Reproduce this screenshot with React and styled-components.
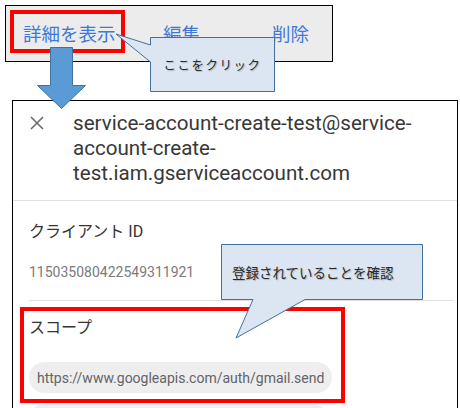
import React from "react";
import styled, { createGlobalStyle } from "styled-components";

const GlobalStyle = createGlobalStyle`
  html, body {
    margin: 0;
    padding: 0;
    background: #fff;
  }
`;

const Canvas = styled.div`
  position: relative;
  width: 460px;
  height: 408px;
  overflow: hidden;
  font-family: Roboto, "Noto Sans CJK JP", sans-serif;
`;

const TopBar = styled.div`
  box-sizing: border-box;
  margin: 5px 0 0 5px;
  width: 328px;
  height: 57px;
  border: 1px solid #000;
  background: #ececec;
  display: grid;
  grid-template-columns: 140px 109px auto;
  align-items: center;
  padding: 0 0 2px 17px;
`;

const Action = styled.span`
  font-family: "Noto Sans CJK JP", sans-serif;
  font-size: 18.5px;
  color: #3f79d6;
  line-height: 24px;
`;

const Panel = styled.div`
  box-sizing: border-box;
  margin: 38px 0 0 12px;
  width: 446px;
  height: 340px;
  border: 1px solid #000;
  border-bottom: none;
  background: #fff;
`;

const Header = styled.div`
  display: flex;
  align-items: flex-start;
  padding: 10px 8px 14px 17px;
  border-bottom: 1px solid #e0e0e0;
`;

const CloseIcon = styled.svg`
  flex: none;
  width: 14px;
  height: 14px;
  margin-top: 5px;
`;

const Title = styled.div`
  margin-left: 29px;
  font-size: 20.6px;
  line-height: 25px;
  color: #383838;
`;

const Section = styled.div`
  padding: ${(p) => p.$top}px 3px 0 16px;
`;

const Label = styled.div`
  font-size: 16px;
  line-height: 24px;
  color: #333;
`;

const Value = styled.div`
  margin-top: 18px;
  font-size: 14px;
  line-height: 20px;
  color: #7a7a7a;
  padding-bottom: 18px;
  border-bottom: 1px solid #e0e0e0;
`;

const Chips = styled.div`
  margin-top: 22px;
  display: flex;
  flex-direction: column;
  align-items: flex-start;
  gap: 11px;
`;

const Chip = styled.span`
  display: inline-flex;
  align-items: center;
  box-sizing: border-box;
  height: 31px;
  width: ${(p) => (p.$w ? `${p.$w}px` : "auto")};
  padding: 0 8px;
  border-radius: 16px;
  background: #eeeeee;
  font-size: 14px;
  color: #636369;
`;

const RedFrame = styled.div`
  position: absolute;
  box-sizing: border-box;
  left: ${(p) => p.$x}px;
  top: ${(p) => p.$y}px;
  width: ${(p) => p.$w}px;
  height: ${(p) => p.$h}px;
  border: 4px solid #ff0000;
`;

const Arrow = styled.svg`
  position: absolute;
  left: 0;
  top: 0;
  width: 120px;
  height: 120px;
`;

const Callout = styled.div`
  position: absolute;
  left: ${(p) => p.$x}px;
  top: ${(p) => p.$y}px;
  width: ${(p) => p.$w}px;
  height: ${(p) => p.$h}px;
  display: flex;
  align-items: center;
  justify-content: ${(p) => (p.$center ? "center" : "flex-start")};
  padding-left: ${(p) => p.$pad || 0}px;
  box-sizing: border-box;
`;

const CalloutShape = styled.svg`
  position: absolute;
  left: 0;
  top: 0;
  overflow: visible;
`;

const CalloutText = styled.span`
  position: relative;
  font-family: "Noto Sans CJK JP", sans-serif;
  font-size: ${(p) => p.$size}px;
  letter-spacing: ${(p) => p.$spacing || 0}px;
  color: #2a2a2a;
  text-shadow: 1px 1px 1px rgba(0, 0, 0, 0.22);
`;

const App = () => {
  return (
    <Canvas>
      <GlobalStyle />
      <TopBar>
        <Action>詳細を表示</Action>
        <Action>編集</Action>
        <Action>削除</Action>
      </TopBar>

      <Panel>
        <Header>
          <CloseIcon viewBox="0 0 14 14">
            <path d="M1 1 L13 13 M13 1 L1 13" stroke="#6b6b6b" strokeWidth="1.6" />
          </CloseIcon>
          <Title>service-account-create-test@service-account-create-test.iam.gserviceaccount.com</Title>
        </Header>
        <Section $top={19}>
          <Label>クライアント ID</Label>
          <Value>115035080422549311921</Value>
        </Section>
        <Section $top={15}>
          <Label>スコープ</Label>
          <Chips>
            <Chip>https://www.googleapis.com/auth/gmail.send</Chip>
            {/* next scope chip, only its top edge is in frame */}
            <Chip $w={299} />
          </Chips>
        </Section>
      </Panel>

      <RedFrame $x={10} $y={10} $w={115} $h={43} />
      <RedFrame $x={20} $y={307} $w={325} $h={96} />

      <Arrow viewBox="0 0 120 120">
        <path
          d="M50.5 47.5 H72.5 V85.5 H85.5 L61.5 108.5 L37.5 85.5 H50.5 Z"
          fill="#5b9bd5"
          stroke="#41719c"
          strokeWidth="1"
        />
      </Arrow>

      <Callout $x={150} $y={37} $w={125} $h={55} $center>
        <CalloutShape width="125" height="55">
          <path
            d="M0.5 0.5 H124.5 V54.5 H0.5 V25 L-34 -3 L0.5 8 Z"
            fill="#dce6f2"
            stroke="#41719c"
            strokeWidth="1"
          />
        </CalloutShape>
        <CalloutText $size={12.5} $spacing={1.5}>ここをクリック</CalloutText>
      </Callout>

      <Callout $x={221} $y={244} $w={202} $h={56} $pad={11}>
        <CalloutShape width="202" height="56">
          <path
            d="M0.5 0.5 H201.5 V55.5 H84 L15 94 L32 55.5 H0.5 Z"
            fill="#dce6f2"
            stroke="#41719c"
            strokeWidth="1"
          />
        </CalloutShape>
        <CalloutText $size={13.5}>登録されていることを確認</CalloutText>
      </Callout>
    </Canvas>
  );
};

export default App;
